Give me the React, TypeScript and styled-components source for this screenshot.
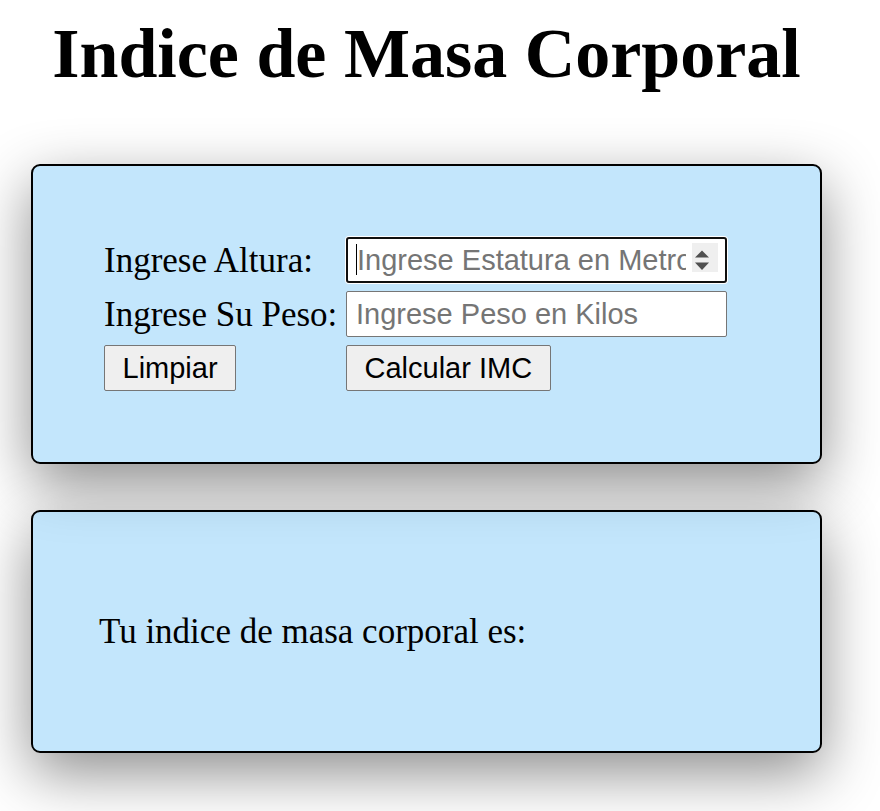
import React from "react";
import styled, { createGlobalStyle } from "styled-components";

const GlobalStyle = createGlobalStyle`
  html, body {
    margin: 0;
    padding: 0;
    background: #ffffff;
  }
  body {
    font-family: "Liberation Serif", "Times New Roman", serif;
    color: #000;
  }
`;

const Page = styled.div`
  width: 791px;
  padding: 14px 0 60px 31px;
`;

const Title = styled.h1`
  margin: 0 0 70px;
  font-size: 70px;
  font-weight: bold;
  line-height: normal;
  text-align: center;
`;

const Card = styled.section<{ $pad: string }>`
  box-sizing: border-box;
  width: 791px;
  padding: ${(p) => p.$pad};
  border: 2px solid #000;
  border-radius: 9px;
  background: rgba(135, 206, 250, 0.5);
  box-shadow: 0 20px 60px rgba(0, 0, 0, 0.45);
  & + & {
    margin-top: 46px;
  }
`;

const FormGrid = styled.div`
  display: grid;
  grid-template-columns: 233px 381px;
  grid-auto-rows: 46px;
  column-gap: 9px;
  row-gap: 8px;
  align-items: center;
`;

const Label = styled.label`
  font-size: 35px;
  line-height: normal;
  white-space: nowrap;
  padding-top: 2px;
`;

const Field = styled.div`
  position: relative;
  height: 46px;
`;

const TextInput = styled.input<{ $focused?: boolean }>`
  box-sizing: border-box;
  width: 381px;
  height: 46px;
  margin: 0;
  font-family: "Liberation Sans", Arial, sans-serif;
  font-size: 29px;
  color: #000;
  background: #fff;
  border: ${(p) => (p.$focused ? "2px solid #101010" : "1px solid #767676")};
  border-radius: ${(p) => (p.$focused ? "3px" : "2px")};
  box-shadow: ${(p) => (p.$focused ? "0 0 0 1px #fff" : "none")};
  padding: ${(p) => (p.$focused ? "0 39px 0 9px" : "0 9px")};
  outline: none;
  &::placeholder {
    color: #757575;
    opacity: 1;
  }
`;

const Caret = styled.span`
  position: absolute;
  left: 10px;
  top: 7px;
  width: 1px;
  height: 31px;
  background: #000;
`;

const Spinner = styled.span`
  position: absolute;
  right: 9px;
  top: 6px;
  width: 26px;
  height: 29px;
  background: #efefef;
`;

const Button = styled.button`
  justify-self: start;
  box-sizing: border-box;
  height: 46px;
  margin: 0;
  padding: 0 17.5px;
  font-family: "Liberation Sans", Arial, sans-serif;
  font-size: 29px;
  color: #000;
  background: #efefef;
  border: 1px solid #767676;
  border-radius: 2px;
`;

const Result = styled.p`
  margin: 0;
  padding-top: 2px;
  font-size: 35px;
  line-height: normal;
`;

export default function App() {
  return (
    <>
      <GlobalStyle />
      <Page>
        <Title>Indice de Masa Corporal</Title>
        <Card $pad="71px">
          <FormGrid>
            <Label htmlFor="altura">Ingrese Altura:</Label>
            <Field>
              <TextInput
                id="altura"
                $focused
                placeholder="Ingrese Estatura en Metros"
                readOnly
              />
              <Caret />
              <Spinner>
                <svg width="26" height="29" viewBox="0 0 26 29">
                  <path d="M10 7.5 L17 14.5 L3 14.5 Z" fill="#505050" />
                  <path d="M3 19.5 L17 19.5 L10 27 Z" fill="#505050" />
                </svg>
              </Spinner>
            </Field>
            <Label htmlFor="peso">Ingrese Su Peso:</Label>
            <Field>
              <TextInput id="peso" placeholder="Ingrese Peso en Kilos" readOnly />
            </Field>
            <Button type="button">Limpiar</Button>
            <Button type="button">Calcular IMC</Button>
          </FormGrid>
        </Card>
        <Card $pad="98px 66px 99px">
          <Result>Tu indice de masa corporal es:</Result>
        </Card>
      </Page>
    </>
  );
}
